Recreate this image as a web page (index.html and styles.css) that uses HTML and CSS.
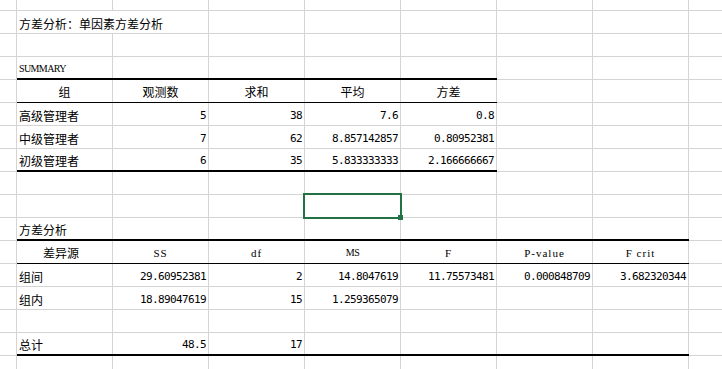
FILE: index.html
```html
<!DOCTYPE html>
<html lang="zh-CN">
<head>
<meta charset="utf-8">
<title>方差分析：单因素方差分析</title>
<link rel="stylesheet" href="styles.css">
</head>
<body>
<div class="sheet">
  <!-- r0 -->
  <div></div><div></div><div></div><div></div><div></div><div></div><div></div><div></div><div></div>
  <!-- r1 -->
  <div></div><div class="t w2">方差分析：单因素方差分析</div><div></div><div></div><div></div><div></div><div></div><div></div>
  <!-- r2 -->
  <div></div><div></div><div></div><div></div><div></div><div></div><div></div><div></div><div></div>
  <!-- r3 -->
  <div></div><div class="t lat caps tb">SUMMARY</div><div class="tb"></div><div class="tb"></div><div class="tb"></div><div class="tb"></div><div></div><div></div><div></div>
  <!-- r4 -->
  <div></div><div class="h bb">组</div><div class="h bb">观测数</div><div class="h bb">求和</div><div class="h bb">平均</div><div class="h bb">方差</div><div></div><div></div><div></div>
  <!-- r5 -->
  <div></div><div class="t">高级管理者</div><div class="n">5</div><div class="n">38</div><div class="n">7.6</div><div class="n">0.8</div><div></div><div></div><div></div>
  <!-- r6 -->
  <div></div><div class="t">中级管理者</div><div class="n">7</div><div class="n">62</div><div class="n">8.857142857</div><div class="n">0.80952381</div><div></div><div></div><div></div>
  <!-- r7 -->
  <div></div><div class="t tb">初级管理者</div><div class="n tb">6</div><div class="n tb">35</div><div class="n tb">5.833333333</div><div class="n tb">2.166666667</div><div></div><div></div><div></div>
  <!-- r8 -->
  <div></div><div></div><div></div><div></div><div></div><div></div><div></div><div></div><div></div>
  <!-- r9 -->
  <div></div><div></div><div></div><div></div><div class="sel"><span class="box"></span><span class="handle"></span></div><div></div><div></div><div></div><div></div>
  <!-- r10 -->
  <div></div><div class="t tb">方差分析</div><div class="tb"></div><div class="tb"></div><div class="tb"></div><div class="tb"></div><div class="tb"></div><div class="tb"></div><div></div>
  <!-- r11 -->
  <div></div><div class="h bb pr">差异源</div><div class="h lat bb">SS</div><div class="h lat bb">df</div><div class="h lat caps bb">MS</div><div class="h lat bb">F</div><div class="h lat bb">P-value</div><div class="h lat bb">F&nbsp;crit</div><div></div>
  <!-- r12 -->
  <div></div><div class="t">组间</div><div class="n">29.60952381</div><div class="n">2</div><div class="n">14.8047619</div><div class="n">11.75573481</div><div class="n">0.000848709</div><div class="n">3.682320344</div><div></div>
  <!-- r13 -->
  <div></div><div class="t">组内</div><div class="n">18.89047619</div><div class="n">15</div><div class="n">1.259365079</div><div></div><div></div><div></div><div></div>
  <!-- r14 -->
  <div></div><div></div><div></div><div></div><div></div><div></div><div></div><div></div><div></div>
  <!-- r15 -->
  <div></div><div class="t tb">总计</div><div class="n tb">48.5</div><div class="n tb">17</div><div class="tb"></div><div class="tb"></div><div class="tb"></div><div class="tb"></div><div></div>
  <!-- r16 -->
  <div></div><div></div><div></div><div></div><div></div><div></div><div></div><div></div><div></div>
</div>
</body>
</html>
```

FILE: styles.css
```css
* {
  box-sizing: border-box;
  margin: 0;
  padding: 0;
}

html, body {
  background: #fff;
}

body {
  margin: 0;
  overflow: hidden;
  color: #000;
  font-family: "Noto Sans CJK SC", "Noto Sans", sans-serif;
  font-size: 12px;
}

.sheet {
  display: grid;
  grid-template-columns: 17px repeat(7, 96px) 34px;
  grid-template-rows: 11px repeat(15, 23px) 14px;
  width: 722px;
  height: 369px;
}

.sheet > div {
  display: flex;
  align-items: flex-end;
  padding: 0 3px 2px 2px;
  line-height: 16px;
  white-space: nowrap;
  background-image: linear-gradient(#d4d4d4, #d4d4d4), linear-gradient(#d4d4d4, #d4d4d4);
  background-size: 1px 100%, 100% 1px;
  background-position: right top, left bottom;
  background-repeat: no-repeat;
  background-origin: border-box;
}

.sheet > .w2 {
  grid-column: span 2;
}

.t {
  justify-content: flex-start;
}

.h {
  justify-content: center;
}

.sheet > .pr {
  padding-right: 10px;
}

.n {
  justify-content: flex-end;
  font-family: "DejaVu Sans Mono", monospace;
  font-size: 11px;
  letter-spacing: -0.62px;
}

.lat {
  font-family: "Liberation Serif", serif;
  font-size: 11px;
  letter-spacing: 1px;
}

.caps {
  font-size: 10px;
  letter-spacing: -0.6px;
}

.sheet > .tb {
  border-bottom: 2px solid #000;
  padding-bottom: 1px;
}

.sheet > .bb {
  border-bottom: 1px solid #000;
  padding-bottom: 2px;
}

.sel {
  position: relative;
}

.box {
  position: absolute;
  left: -2px;
  top: -2px;
  width: 99px;
  height: 26px;
  border: 2px solid #217346;
}

.handle {
  position: absolute;
  left: 93px;
  top: 20px;
  width: 5px;
  height: 5px;
  background: #217346;
}
```
